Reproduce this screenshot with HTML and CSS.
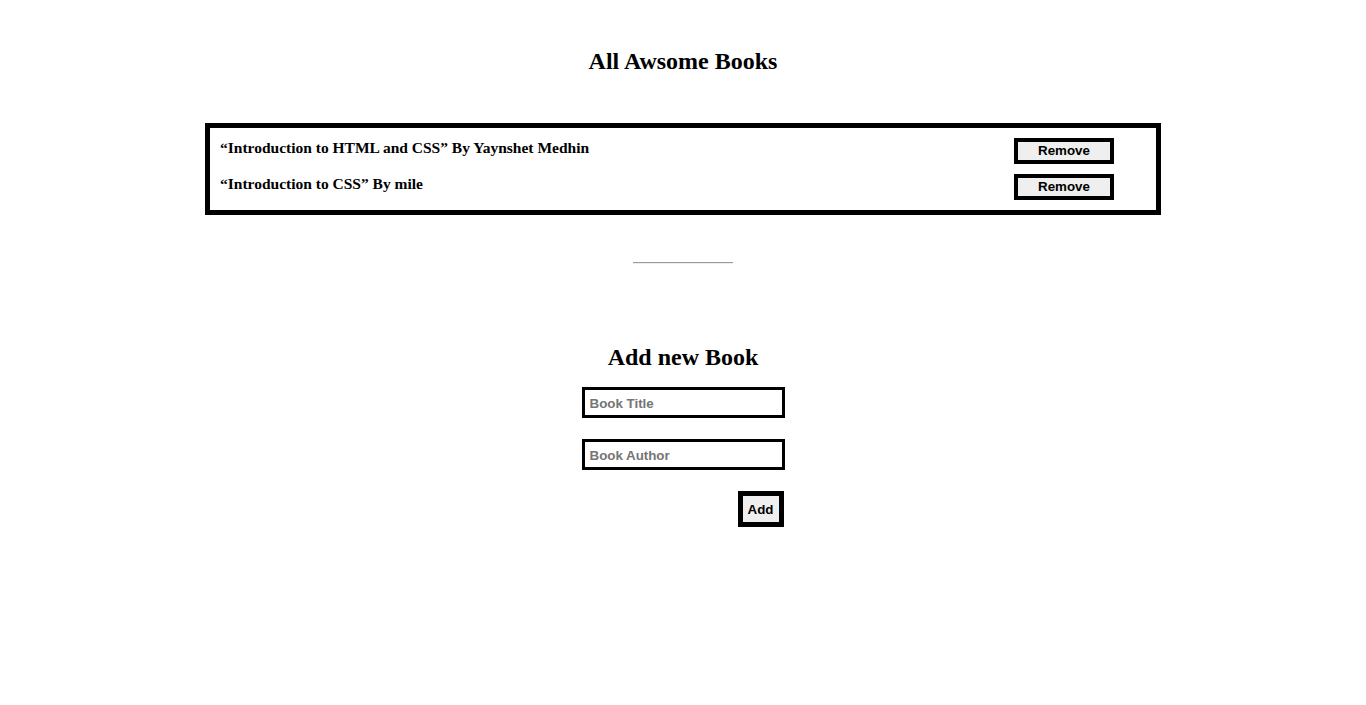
FILE: index.html
```html
<!DOCTYPE html>
<html>
<head>
<meta charset="utf-8">
<link rel="stylesheet" href="styles.css">
</head>
<body>
<main class="page">
  <h2 class="title">All Awsome Books</h2>
  <section class="book-list">
    <div class="book-row">
      <p class="book-text">“Introduction to HTML and CSS” By Yaynshet Medhin</p>
      <button class="remove-btn">Remove</button>
    </div>
    <div class="book-row">
      <p class="book-text">“Introduction to CSS” By mile</p>
      <button class="remove-btn">Remove</button>
    </div>
  </section>
  <hr class="divider">
  <section class="add-section">
    <h2 class="add-title">Add new Book</h2>
    <form class="add-form">
      <input class="field" type="text" placeholder="Book Title">
      <input class="field" type="text" placeholder="Book Author">
      <button class="add-btn" type="button">Add</button>
    </form>
  </section>
</main>
</body>
</html>
```
FILE: styles.css
```css
html, body {
  margin: 0;
  padding: 0;
  background: #fff;
}
body {
  font-family: "Liberation Serif", "Times New Roman", serif;
  color: #000;
}
.page {
  display: flex;
  flex-direction: column;
  align-items: center;
  padding-top: 47px;
}
.title {
  margin: 0;
  font-size: 24px;
  line-height: 28px;
  font-weight: bold;
}
.book-list {
  box-sizing: border-box;
  width: 956px;
  margin-top: 48px;
  border: 5px solid #000;
  padding: 10px 42px 11px 10px;
  display: flex;
  flex-direction: column;
  gap: 11px;
}
.book-row {
  display: flex;
  align-items: center;
  justify-content: space-between;
  height: 25px;
}
.book-text {
  margin: 0;
  font-size: 15.5px;
  font-weight: bold;
  line-height: 20px;
  position: relative;
  top: -3px;
}
.remove-btn {
  box-sizing: border-box;
  width: 100px;
  height: 26px;
  border: 4px solid #000;
  background: #efefef;
  font-family: "Liberation Sans", Arial, sans-serif;
  font-weight: bold;
  font-size: 13.33px;
  padding: 0;
  color: #000;
}
.divider {
  width: 100px;
  margin: 47px 0 0;
  border: 0;
  border-top: 1px solid #9a9a9a;
  border-bottom: 1px solid #eee;
  height: 0;
}
.add-section {
  display: flex;
  flex-direction: column;
  align-items: center;
  margin-top: 79px;
}
.add-title {
  margin: 0;
  font-size: 24px;
  line-height: 28px;
  font-weight: bold;
}
.add-form {
  display: flex;
  flex-direction: column;
  align-items: flex-end;
  gap: 21px;
  margin-top: 16px;
}
.field {
  box-sizing: border-box;
  width: 203px;
  height: 31px;
  border: 3px solid #000;
  padding: 1px 5px 0;
  font-family: "Liberation Sans", Arial, sans-serif;
  font-weight: bold;
  font-size: 13.33px;
  outline: none;
}
.field::placeholder {
  color: #757575;
}
.add-btn {
  box-sizing: border-box;
  width: 46px;
  height: 36px;
  margin-right: 1px;
  border: 5px solid #000;
  background: #efefef;
  font-family: "Liberation Sans", Arial, sans-serif;
  font-weight: bold;
  font-size: 13.33px;
  padding: 0;
  color: #000;
}
```
